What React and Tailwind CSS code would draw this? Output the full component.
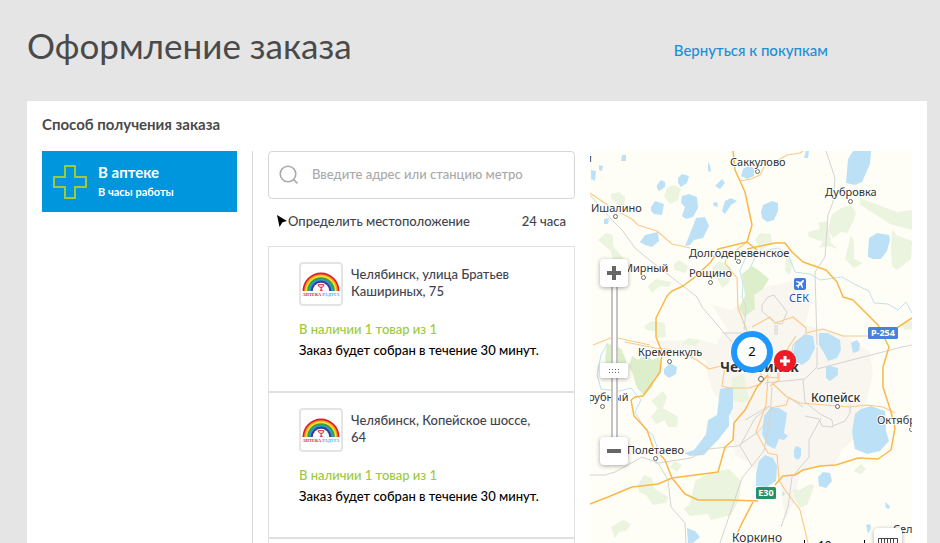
import React, { useState } from 'react'

const pharmacies = [
  { id: 1, address: 'Челябинск, улица Братьев Кашириных, 75' },
  { id: 2, address: 'Челябинск, Копейское шоссе, 64' },
]

const lakes = [
  'M622 155h4v6h-5z',
  'M591 170l5 1-1 10-4-2z',
  'M599 165l4 1-1 5-3-1z',
  'M604 219l5-1-1 6-4 0z',
  'M657 185l4-5 4 2v5l-6 4-2-3z',
  'M678 178l4-4 7 2-2 7-6 4-3-4z',
  'M708 162l2 3 1 7-3-1z',
  'M715 186l7-7 3 4-5 6z',
  'M651 207l4-6 9 3-2 11-8-1-3-3z',
  'M682 196l7-2 8 3 1 11-5 9-7 2-4-3 3-9-4-4z',
  'M685 246l8-20 3-8 9-1 4 9-6 12-9 2-4 5z',
  'M640 242l5-7 13-3 1 9-7 6-7-2z',
  'M713 203l4-1 1 5-4-1z',
  'M722 211l3-10 6-3 6 3-6 4-6 9z',
  'M741 176l2-7 5-3 6 2v8l-7 3z',
  'M761 212l2-7 9-4 6 2 0 8-4 9-7 2-5-4z',
  'M804 158l2-7h3l-1 7z',
  'M846 183l2-24 5-8h18l-1 13-8 18-7 3z',
  'M868 252l1-14 8-5 12 2 1 5-3 11-6 8-8 0-5-2z',
  'M793 354l2-12 10-8 8 2 2 12-6 12-7 5-9-4z',
  'M819 333h9l12 7 1 10-4 8-9 3-4-8-5-8z',
  'M851 343l6-3 3 4-1 7-6 2z',
  'M826 367l4-1 8 2 0 7-8 6-4-3z',
  'M664 369l6-6 7 4-1 7-7 4-5-4z',
  'M720 389l9-2 4 1v20l-4 8v10l-11 14-6 6-8 9-14 1-6-3 10-3 7-9 5-7 2-14 9-5z',
  'M762 434l2-18 6-8 9 0 8 5-3 20 4 3-4 4-5-1-4 10-8-4z',
  'M794 450l2-4 5 2v8l-3 4-4-3z',
  'M852 432l3-18 6-5 10-3 14 5 1 20 3 10-9 10-13 3-12-5z',
  'M756 474l3-13 6-6 8 3 4 8-1 15-9 6-11-1z',
  'M818 477l5-5 7 1 2 8-6 7-7-2z',
  'M885 502l5 4-1 3-3-1z',
  'M866 525l4-1 1 4-3 6z',
  'M687 528l8 3 5 6-7 6h-5z',
  'M783 491l2 3-3 2z',
]

const greens = [
  'M611 194l8-2 6 5-1 10-6-2-7-7z',
  'M664 196l3-8 6-3 8 3-3 12-8 4z',
  'M598 240l8-7 7 2v11l11 13 3 9-12-4-5-14z',
  'M674 264l5-4 9 6-2 7-12-3z',
  'M648 286l8-7 16 3-3 5-9-1-8 7-3-5z',
  'M644 326l8-5 13 2 1 14-9 1-2-7-8-1z',
  'M682 344l6-6 12 2-4 6z',
  'M712 268l7-7 12 6-2 16-7 5z',
  'M755 240l5-7 11 1 1 10-11 7z',
  'M828 230l4-16 9-6 10-3 5 8-3 9-6 11-6-1-8 6z',
  'M808 232l12-3-2-6 9-2 4 22 7 6-10-3-9 2 4-6-14-5z',
  'M845 259l6-24 3 7v17l9 4-9 5z',
  'M860 198l13 5 24 9 15-2v20l-22-6-17-11-13-8z',
  'M892 229l4 6 16 6-1 18-14 11-5-4-1-16z',
  'M902 323l10-2v8l-8 1z',
  'M732 378l12-4 5 25-7 4-10-3z',
  'M651 401l12-10 4 6-4 11 15 9-1 10-9 0-3-7-9 4-5-7 7-9z',
  'M670 467l4-6 8 4-5 7z',
  'M638 485l6-10 8 3 2 10 14 9-2 6-13 2-7-10-7-3z',
  'M690 504l5-23 13-7 21-5 12 12-2 19-8 15-20 5-3-6-18 2-6-7z',
  'M611 527l12-7 8 4-5 7-7 1-4 6z',
  'M854 470l7-6 5 5-5 5-6-2z',
  'M793 489l6 1 12-6 3 2-4 12-3 7-8 3-4-9z',
  'M786 257l7 4-3 14-5-4z',
]

const forests = [
  'M629 366l3-10 6 4 8-6 6 6 7-3 3 9-2 8-6 4-1 9-9 8-7-7-4-13z',
  'M607 344l10 2 5 4 4 10 1 14-8-2-4 8-7-6-3-16z',
  'M742 274l10-8 5 3 12 10-6 10-9 6 1 14-11 8-5-9 6-12z',
]

const highways = [
  'M733 151l2 19 10 22 7 33-5 17 10 8',
  'M747 249l28-6h10l7 9 11 10 23 8 11 12 6 15 10 3 12 12 13 13 11 22-6 20v20l8 25 4 16-4 22-13 9-20-1-22 7-16 1-17 4-8 5-12 1-8 9',
  'M747 242l-29 7-7 13-16 15-12 9-11 5-5 5-11 22v19l6 15-2 20-17 24-8 1-4 3 3 16 13 14 6 17 12 13 7 18 13 16 13 6h30l30 1',
  'M590 504l18-7 24-10 26-3 14-6 46-6 7-25 8-7 1-17 11-13 12-23 11-12',
  'M753 502l-11 21-9 20',
  'M868 336l15 1 29-19',
]

const roads = [
  'M590 193l25 17 17 9 6 6 19 6 15 13 18 4',
  'M747 242l-20 15-2 6 12 15 1 30 9 23',
  'M740 181l11-2 9-4 4-8 13-6 10-6 13-2 3-2',
  'M752 327l18-10 5 6 18-6 13 11v5l17-4 20 7h25',
  'M772 383l15 14 13 6 50 4 17-2 16 2 12 6',
  'M593 345l20-8 37 8',
  'M625 342l30 6 20 2 22 10 12 9 12-3',
  'M725 366l-3 20 7 2h20l12-4v-14h18v10l-9 6',
  'M768 377l10 1v-12l6-12 12-18',
  'M770 408l16-3 3-8',
  'M768 377l-2 28-10 27 12 21 9 2 2 25 6 10 15 20 8 33',
]

const rails = [
  'M590 195l22 25 10 10 13 18 17 14 31 24 14 11 5 10 30 35',
  'M826 151l9 27-2 24-5 13-3 42-10 15 2 73',
  'M590 475h15l10-3 27-15 16 6 33-5 17-9 30-3 20-14 12-15',
  'M658 463l10 17 3 27 14 16 1 20',
  'M720 543l22-65 22-27 6-33 2-31',
  'M817 369l85-22 10-2',
  'M765 383l40-4 12-12v-20',
  'M803 380l2 22 15 12 12 6 1 7-11-1-3-7-14-3',
  'M821 418l-12 22v17l-17 20-4 30-7 20',
  'M788 397l15 10',
  'M833 426l12-5 5-8v-8',
  'M762 305l6-8 6-2 13 17-5 12-7-1-13-12z',
  'M775 325v10M777 325v10M805 335l-12 10-3 20',
  'M722 333h20M752 466l-12-20 15-28 15-12M745 420l24-14',
]

const rivers = [
  'M747 255l-7 15 3 15-1 12 4 10-2 24',
  'M750 268l8-16 20-4 10 6 7 18 15 2 10 6 22-3 14 8 13 6 5 12 14 1 10 6 8-8 6 11 12-3 8 3',
  'M608 343l-7 12-4 20 4 14 8 1 10 1 12-3 10 12-6 12 10 17 8 6 5 15-2 14',
]

const places = [
  { name: 'й', x: 585, y: 162 },
  { name: 'Саккулово', x: 730, y: 166, dot: [757.5, 171.5] },
  { name: 'Дубровка', x: 825, y: 196, dot: [850.5, 201.5] },
  { name: 'Ишалино', x: 591, y: 212, dot: [615.5, 216.5] },
  { name: 'Долгодеревенское', x: 689, y: 257, dot: [738.5, 261.5] },
  { name: 'Мирный', x: 623, y: 272, dot: [643.5, 277.5] },
  { name: 'Рощино', x: 689, y: 277, dot: [710.5, 282.5] },
  { name: 'Кременкуль', x: 638, y: 356, dot: [669.5, 361.5] },
  { name: 'рубный', x: 588, y: 401, dot: [602.5, 406.5] },
  { name: 'Полетаево', x: 627, y: 454, dot: [655.5, 458.5] },
  { name: 'Октябр', x: 877, y: 424, dot: [911.5, 429.5] },
  { name: 'Коркино', x: 732, y: 542, size: 12 },
  { name: 'Сел', x: 893, y: 533 },
]

function SearchIcon() {
  return (
    <svg viewBox="0 0 20 20" className="h-5 w-5 shrink-0" fill="none" stroke="#a9a9a9" strokeWidth="1.6">
      <circle cx="9" cy="9" r="7.8" />
      <path d="M14 14l4.4 4.4" />
    </svg>
  )
}

function PharmacyLogo() {
  const bands = [
    ['#e1192c', 18.5],
    ['#f39a1c', 16.8],
    ['#f7e32a', 15.4],
    ['#35a23f', 13.8],
    ['#2a9bd8', 12],
    ['#3a3f98', 10.4],
    ['#fff', 8.2],
  ]
  return (
    <div className="h-11 w-11 shrink-0 rounded border-2 border-[#e4e4e4] bg-white">
      <svg viewBox="0 0 40 40" className="h-full w-full" role="img" aria-label="Аптека Радуга">
        {bands.map(([color, r]) => (
          <path key={color} d={`M${20 - r} 27a${r} ${r} 0 0 1 ${r * 2} 0z`} fill={color} />
        ))}
        <path d="M17.2 20.7h5.6c0 2-1.2 2.6-2.6 2.6s-2.8-.6-3-2.6M20.2 23.3v3M18.8 26.3h2.8" fill="none" stroke="#e1192c" strokeWidth="1" />
        <text x="20" y="31.8" textAnchor="middle" fontSize="4.4" fontWeight="700" className="font-['Liberation_Serif',serif]">
          <tspan fill="#e1192c">АПТЕКА</tspan>
          <tspan fill="#35aee2"> РАДУГА</tspan>
        </text>
      </svg>
    </div>
  )
}

function PharmacyCard({ address }) {
  return (
    <li className="border border-[#e0e0e0] pt-[15px] pr-7 pb-[30px] pl-[30px]">
      <div className="flex gap-2">
        <PharmacyLogo />
        <p className="pt-1 leading-[17px] text-[#3f4450]">{address}</p>
      </div>
      <p className="mt-[13px] leading-[21px] text-[#9bca3c]">В наличии 1 товар из 1</p>
      <p className="leading-[21px] text-black">Заказ будет собран в течение 30 минут.</p>
    </li>
  )
}

function MapCanvas() {
  return (
    <svg
      viewBox="590 151 322 392"
      preserveAspectRatio="xMinYMin slice"
      className="absolute inset-0 h-full w-full font-['Noto_Sans',sans-serif] font-normal"
      strokeLinejoin="round"
    >
      <rect x="590" y="151" width="322" height="392" fill="#fffef6" />
      <path
        d="M712 305l20 5 13-10 23-14 32-6 12 20-7 25 40 10 25 17 3 23-8 30-12 35-11 10-7 15-35 5-5 30-10 20-5-40-25-10-7-8-13-7-2-35-21-30-7-25 13-25 10-10zM645 341l55-1 32 8-4 20z"
        fill="#f9f5ef"
      />
      {greens.map((d) => <path key={d} d={d} fill="#eaf4de" />)}
      {forests.map((d) => <path key={d} d={d} fill="#dcefca" />)}
      {rivers.map((d) => <path key={d} d={d} fill="none" stroke="#bfe1f3" strokeWidth="1" />)}
      {lakes.map((d) => <path key={d} d={d} fill="#bce1f6" />)}
      {rails.map((d) => <path key={d} d={d} fill="none" stroke="#d4d4d1" strokeWidth="1" />)}
      {roads.map((d) => <path key={d} d={d} fill="none" stroke="#fbc98a" strokeWidth="1.1" />)}
      {highways.map((d) => <path key={d} d={d} fill="none" stroke="#f9b848" strokeWidth="1.5" />)}

      {places.map((p) => (
        <g key={p.name}>
          {p.dot && <circle cx={p.dot[0]} cy={p.dot[1]} r="2" fill="#fff" stroke="#666" strokeWidth="1" />}
          <text x={p.x} y={p.y} fontSize={p.size || 11} fill="#333" stroke="#fff" strokeWidth="2" paintOrder="stroke">{p.name}</text>
        </g>
      ))}
      <circle cx="837.5" cy="406.5" r="2" fill="#fff" stroke="#666" />
      <text x="811" y="402" fontSize="12" fontWeight="500" fill="#333" stroke="#fff" strokeWidth="2" paintOrder="stroke">Копейск</text>
      <circle cx="761" cy="379" r="2.5" fill="#fff" stroke="#666" />
      <text x="720" y="372" fontSize="14" fontWeight="700" fill="#333" stroke="#fff" strokeWidth="2" paintOrder="stroke">Челябинск</text>

      <rect x="794" y="278" width="12" height="12" rx="2" fill="#3d7be0" />
      <path d="M803.8 280.2c-.7-.5-1.5.1-2.2.8l-1 1-4-1-.8.8 3.2 1.8-1.6 1.7-1.3-.2-.5.6 1.8.9.9 1.8.6-.5-.2-1.3 1.7-1.6 1.8 3.2.8-.8-1-4 1-1c.7-.7 1.3-1.5.8-2.2z" fill="#fff" />
      <text x="799" y="302" fontSize="11" textAnchor="middle" fill="#2551a5" stroke="#fff" strokeWidth="2" paintOrder="stroke">СЕК</text>

      <rect x="868" y="327" width="30" height="12" rx="1.5" fill="#4a7fdc" />
      <text x="883" y="336" fontSize="9" fontWeight="700" textAnchor="middle" fill="#fff">Р-254</text>
      <rect x="756" y="487" width="20" height="12" rx="1.5" fill="#229368" />
      <text x="766" y="496" fontSize="9" fontWeight="700" textAnchor="middle" fill="#fff">E30</text>

      <path d="M804.5 540v3M864.5 540v3" stroke="#000" />
      <text x="818" y="550" fontSize="12" fill="#000">10 км</text>
    </svg>
  )
}

function ZoomControl() {
  const [zoom, setZoom] = useState(10)
  const btn = 'relative z-10 flex h-7 w-7 items-center justify-center rounded bg-white shadow-[0_1px_4px_rgba(0,0,0,0.35)]'
  return (
    <div className="absolute top-[108px] left-2.5 flex flex-col items-center">
      <button type="button" aria-label="Приблизить" className={btn} onClick={() => setZoom(Math.min(23, zoom + 1))}>
        <svg viewBox="0 0 14 14" className="h-3.5 w-3.5"><path d="M7 0v14M0 7h14" stroke="#666" strokeWidth="4" /></svg>
      </button>
      <div className="relative flex h-[150px] w-7 justify-center">
        <div className="w-[7px] border-x-2 border-[#c4c4c4] bg-white" />
        <input
          type="range"
          min="0"
          max="23"
          value={zoom}
          onChange={(e) => setZoom(Number(e.target.value))}
          aria-label="Масштаб"
          className="absolute inset-0 m-0 h-full w-7 cursor-pointer appearance-none bg-transparent [direction:rtl] [writing-mode:vertical-lr] [&::-webkit-slider-thumb]:h-[15px] [&::-webkit-slider-thumb]:w-7 [&::-webkit-slider-thumb]:appearance-none [&::-webkit-slider-thumb]:rounded-xs [&::-webkit-slider-thumb]:bg-white [&::-webkit-slider-thumb]:shadow-[0_1px_4px_rgba(0,0,0,0.35)]"
        />
        <svg
          viewBox="0 0 28 15"
          className="pointer-events-none absolute left-0 h-[15px] w-7"
          style={{ top: Math.round((1 - zoom / 23) * 135) }}
          fill="#666"
        >
          {[9, 12, 15, 18].map((x) => (
            <path key={x} d={`M${x} 6h1v1h-1zM${x} 9h1v1h-1z`} />
          ))}
        </svg>
      </div>
      <button type="button" aria-label="Отдалить" className={btn} onClick={() => setZoom(Math.max(0, zoom - 1))}>
        <svg viewBox="0 0 14 14" className="h-3.5 w-3.5"><path d="M0 7h14" stroke="#666" strokeWidth="4" /></svg>
      </button>
    </div>
  )
}

function PharmacyMap() {
  return (
    <section aria-label="Карта аптек" className="relative ml-[15px] flex-1 overflow-hidden">
      <MapCanvas />
      <ZoomControl />
      <button
        type="button"
        className="absolute top-[180px] left-[141px] flex h-[42px] w-[42px] items-center justify-center rounded-full border-6 border-[#1e98ff] bg-white font-['Noto_Sans',sans-serif] text-[13px] font-normal text-black"
      >
        2
      </button>
      <button
        type="button"
        aria-label="Аптека"
        className="absolute top-[199px] left-[184px] flex h-[22px] w-[22px] items-center justify-center rounded-full bg-[#ed1c24]"
      >
        <svg viewBox="0 0 10 10" className="h-2.5 w-2.5"><path d="M5 0v10M0 5h10" stroke="#fff" strokeWidth="3" /></svg>
      </button>
      <button
        type="button"
        aria-label="Линейка"
        className="absolute right-2.5 -bottom-[13px] flex h-7 w-7 items-center justify-center rounded bg-white shadow-[0_1px_4px_rgba(0,0,0,0.35)]"
      >
        <svg viewBox="0 0 20 8" className="h-2 w-5" fill="none" stroke="#444">
          <path d="M.5 8V.5h19V8M3.5 1v4M6.5 1v4M9.5 1v4M12.5 1v4M15.5 1v4" />
        </svg>
      </button>
    </section>
  )
}

export default function App() {
  return (
    <div className="flex h-screen flex-col overflow-hidden bg-[#e5e5e5] pr-[13px] pl-[27px] font-['Lato',sans-serif] text-[13px] font-medium">
      <header className="flex items-center justify-between pt-[23px] pr-[99px] pb-[33px]">
        <h1 className="text-[35px] leading-[45px] font-normal text-[#4a4a4a]">Оформление заказа</h1>
        <a href="#catalog" className="mt-2 text-[15px] leading-5 text-[#1a8fd8]">Вернуться к покупкам</a>
      </header>

      <main className="flex min-h-0 flex-1 flex-col bg-white px-[15px]">
        <h2 className="pt-[11px] pb-[15px] text-[15px] leading-6 font-bold text-[#4a4a4a]">Способ получения заказа</h2>

        <div className="flex min-h-0 flex-1">
          <div className="w-[195px] shrink-0">
            <button type="button" className="flex w-full items-center gap-[11px] bg-[#0096de] px-[11px] py-[11px] text-left font-bold text-white">
              <svg viewBox="0 0 34 34" className="h-[34px] w-[34px]" fill="none" stroke="#9bcb3c" strokeWidth="2">
                <path d="M12 1h10v11h11v10H22v11H12V22H1V12h11z" />
              </svg>
              <span className="flex flex-col">
                <span className="text-[15px] leading-[21px]">В аптеке</span>
                <span className="text-[11px] leading-[18px]">В часы работы</span>
              </span>
            </button>
          </div>

          <div className="ml-[15px] w-[323px] shrink-0 border-l border-[#d8d8d8] pl-[15px]">
            <label className="flex h-12 items-center gap-[13px] rounded border border-[#d6d6d6] px-2.5">
              <SearchIcon />
              <input
                type="text"
                aria-label="Адрес или станция метро"
                placeholder="Введите адрес или станцию метро"
                className="min-w-0 flex-1 outline-none placeholder:text-[#a9a9a9]"
              />
            </label>

            <div className="flex justify-between px-[9px] pt-3 pb-[15px] leading-5 text-[#3f4450]">
              <button type="button" className="flex items-center gap-px">
                <svg viewBox="0 0 10 12" className="h-3 w-2.5"><path d="M0 0l10 6-4.5 1.2L2.5 12z" fill="#000" /></svg>
                Определить местоположение
              </button>
              <button type="button">24 часа</button>
            </div>

            <ul>
              {pharmacies.map((p) => <PharmacyCard key={p.id} address={p.address} />)}
              <li className="h-36 border border-[#e0e0e0]" />
            </ul>
          </div>

          <PharmacyMap />
        </div>
      </main>
    </div>
  )
}
